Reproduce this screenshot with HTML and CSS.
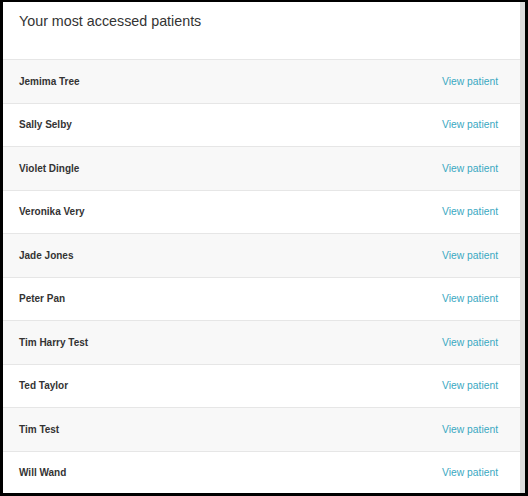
FILE: index.html
```html
<!DOCTYPE html>
<html>
<head>
<meta charset="utf-8">
<link rel="stylesheet" href="styles.css">
</head>
<body>
<div class="frame">
  <div class="panel">
    <div class="panel-header">Your most accessed patients</div>
    <ul class="list">
      <li class="row"><span class="name">Jemima Tree</span><a class="link" href="#">View patient</a></li>
      <li class="row"><span class="name">Sally Selby</span><a class="link" href="#">View patient</a></li>
      <li class="row"><span class="name">Violet Dingle</span><a class="link" href="#">View patient</a></li>
      <li class="row"><span class="name">Veronika Very</span><a class="link" href="#">View patient</a></li>
      <li class="row"><span class="name">Jade Jones</span><a class="link" href="#">View patient</a></li>
      <li class="row"><span class="name">Peter Pan</span><a class="link" href="#">View patient</a></li>
      <li class="row"><span class="name">Tim Harry Test</span><a class="link" href="#">View patient</a></li>
      <li class="row"><span class="name">Ted Taylor</span><a class="link" href="#">View patient</a></li>
      <li class="row"><span class="name">Tim Test</span><a class="link" href="#">View patient</a></li>
      <li class="row"><span class="name">Will Wand</span><a class="link" href="#">View patient</a></li>
    </ul>
  </div>
  <div class="scroll-strip"></div>
</div>
</body>
</html>
```
FILE: styles.css
```css
html, body {
  margin: 0;
  padding: 0;
  background: #000;
  width: 528px;
  height: 496px;
  overflow: hidden;
}
body {
  font-family: "Liberation Sans", Arial, sans-serif;
  color: #333;
  box-sizing: border-box;
  padding: 2px 3px 3px 3px;
}
.frame {
  display: flex;
  height: 491px;
  background: #fff;
}
.panel {
  flex: 1;
  background: #fff;
  overflow: hidden;
}
.scroll-strip {
  width: 5px;
  background: #dcdcdc;
}
.panel-header {
  height: 57px;
  box-sizing: border-box;
  padding: 11px 0 0 16px;
  font-size: 14.3px;
  line-height: 16px;
  color: #333;
}
.list {
  list-style: none;
  margin: 0;
  padding: 0;
}
.row {
  display: flex;
  align-items: center;
  justify-content: space-between;
  height: 43.5px;
  box-sizing: border-box;
  border-top: 1.5px solid #e6e6e6;
  padding: 0 22px 0 16px;
}
.row:nth-child(odd) {
  background: #f8f8f8;
}
.name {
  font-weight: bold;
  font-size: 10px;
  color: #333;
}
.link {
  font-size: 10.3px;
  color: #3aa8c2;
  text-decoration: none;
}
```
